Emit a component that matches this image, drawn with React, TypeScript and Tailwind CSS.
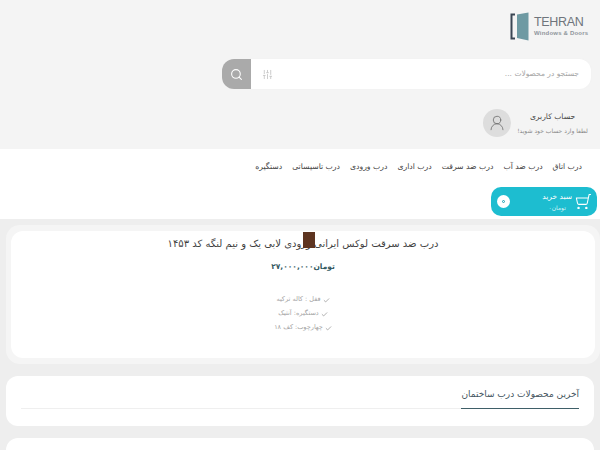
import React from "react";
import { Check, Search, ShoppingCart, SlidersVertical, UserRound } from "lucide-react";

const NAV = ["درب اتاق", "درب ضد آب", "درب ضد سرقت", "درب اداری", "درب ورودی", "درب تاسیساتی", "دستگیره"];
const FEATURES = ["قفل : کاله ترکیه", "دستگیره: آنتیک", "چهارچوب: کف ۱۸"];

function Logo() {
  return (
    <div dir="ltr" className="flex items-center gap-[5px]">
      <svg width="19" height="29" viewBox="0 0 19 29">
        <path d="M5 2.500H1.500V26.500H5" fill="none" stroke="#3b4654" strokeWidth="2" />
        <path d="M7 2.500L18.500 0.500V28.500L7 26V2.500Z" fill="#6e9aa3" />
      </svg>
      <div className="flex w-[56px] flex-col font-['Liberation_Sans',sans-serif]">
        <span className="text-[12.500px] leading-[13px] tracking-[-0.3px] text-[#6f757c]">TEHRAN</span>
        <span className="text-[6px] leading-[8px] font-bold tracking-[0.2px] whitespace-nowrap text-[#8f959b]">Windows &amp; Doors</span>
      </div>
    </div>
  );
}

export default function App() {
  return (
    <div dir="rtl" className="h-[450px] overflow-hidden bg-[#eeeeee] font-['DejaVu_Sans','Liberation_Sans',sans-serif]">
      <header className="h-[149px] bg-[#f4f4f4] px-[9px]">
        <div className="flex justify-start pt-[12px] pr-[1px]">
          <Logo />
        </div>
        <div className="mt-[18px] flex h-[30px] w-[369px]">
          <div className="flex flex-1 items-center justify-between rounded-r-[12px] bg-white pr-[12px] pl-[11px] shadow-[0_0_2px_#f0f0f0]">
            <span className="text-[7.500px] text-[#a5a5a5]">جستجو در محصولات ...</span>
            <SlidersVertical size={11} className="text-[#c8c8c8]" />
          </div>
          <div className="flex w-[29px] items-center justify-center rounded-l-[12px] bg-[#aaaaaa]">
            <Search size={13} className="text-white" strokeWidth={2} />
          </div>
        </div>
        <div className="mt-[20px] flex items-center gap-[6px] pr-[3px]">
          <div className="flex w-[71px] flex-col items-center gap-[4px]">
            <span className="text-[7.600px] leading-[12px] text-[#444444]">حساب کاربری</span>
            <span className="text-[6px] leading-[8px] whitespace-nowrap text-[#888888]">لطفا وارد حساب خود شوید!</span>
          </div>
          <div className="flex h-[28px] w-[28px] items-center justify-center rounded-full bg-[#dddddd]">
            <UserRound size={18} strokeWidth={1} className="text-[#666666]" />
          </div>
        </div>
      </header>

      <nav className="h-[70px] bg-white">
        <div className="flex h-[36px] items-center gap-[10px] pr-[18px]">
          {NAV.map((item) => (
            <span key={item} className="text-[7.700px] whitespace-nowrap text-[#444444]">{item}</span>
          ))}
        </div>
        <div className="mt-[2px] mr-[3px] flex h-[29px] w-[106px] items-center rounded-[10px] bg-[#1dbdd0] pr-[5px] pl-[6px] text-white">
          <ShoppingCart size={17} strokeWidth={1.500} className="-scale-x-100" />
          <div className="mr-[3px] flex flex-col items-center">
            <span className="text-[7.500px] leading-[12px]">سبد خرید</span>
            <span className="text-[6px] leading-[10px] text-[#d8f4f7]">تومان۰</span>
          </div>
          <div className="mr-auto flex h-[13px] w-[13px] items-center justify-center rounded-full bg-white">
            <div className="h-[3px] w-[3px] rounded-full border border-[#1a9fb0]" />
          </div>
        </div>
      </nav>

      <section className="mt-[6px] ml-[6px] h-[139px] rounded-[14px] bg-[#f5f5f5] pt-[6px] pr-[5px] pb-[6px] pl-[5px]">
        <div className="relative flex h-[127px] flex-col items-center rounded-[12px] bg-white pt-[5px]">
          <h1 className="text-[10px] leading-[16px] whitespace-nowrap text-[#3f3f3f]">درب ضد سرقت لوکس ایرانی ورودی لابی یک و نیم لنگه کد ۱۴۵۳</h1>
          <div className="absolute top-px left-[292px] h-[16px] w-[12px] bg-[#5d3420]" />
          <p className="mt-[8px] text-[7.500px] leading-[14px] font-bold text-[#33595f]">تومان۲۷,۰۰۰,۰۰۰</p>
          <ul className="mt-[19px] flex flex-col items-center">
            {FEATURES.map((item) => (
              <li key={item} className="flex h-[14px] items-center gap-[2px] text-[6.500px] text-[#a5a5a5]">
                <Check size={7} strokeWidth={2} className="text-[#777777]" />
                {item}
              </li>
            ))}
          </ul>
        </div>
      </section>

      <section className="mx-[6px] mt-[12px] h-[50px] rounded-[12px] bg-white px-[15px] pt-[10px]">
        <div className="border-b border-[#efefef]">
          <h2 className="-mb-px w-fit border-b border-[#3f5f68] pb-[6px] text-[9px] leading-[16px] text-[#445560]">آخرین محصولات درب ساختمان</h2>
        </div>
      </section>

      <section className="mx-[6px] mt-[12px] h-[40px] rounded-[12px] bg-white" />
    </div>
  );
}
